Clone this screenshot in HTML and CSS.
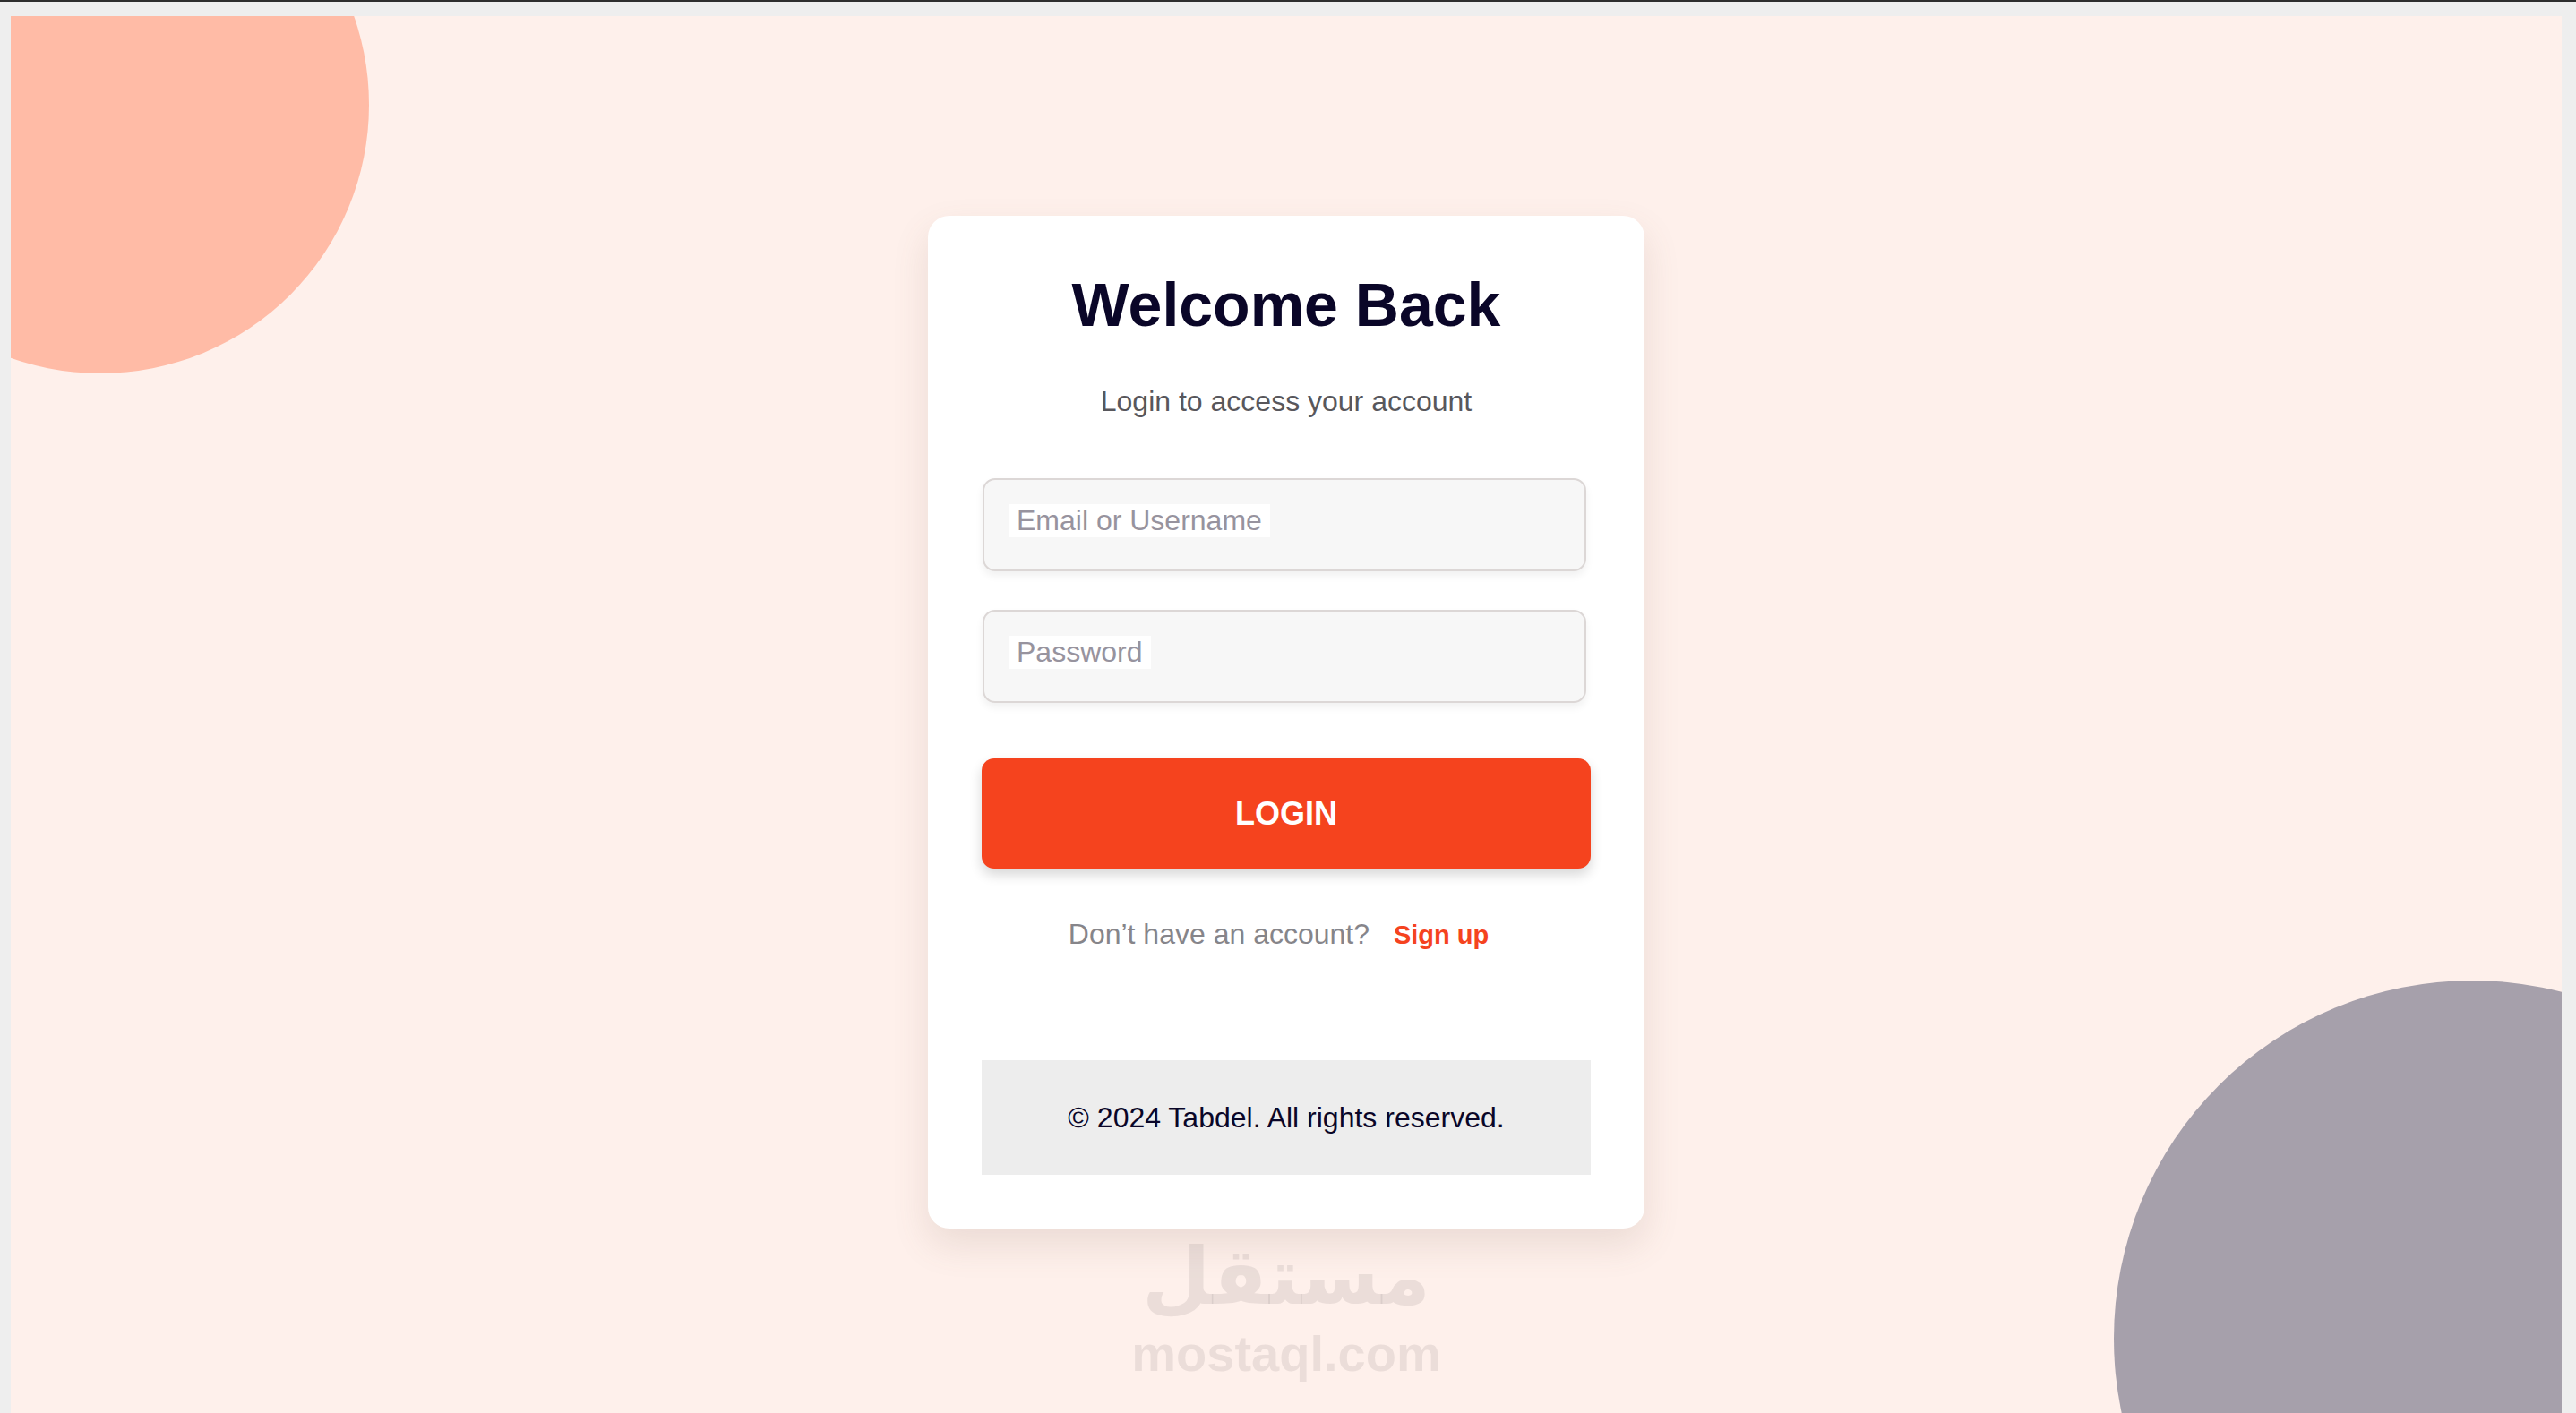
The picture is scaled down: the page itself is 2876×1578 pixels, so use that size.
FILE: index.html
```html
<html>
<head>
	<link rel="stylesheet" href="styles.css">
</head>

<body>

<div class="topbar"></div>
<div class="screen">
	<div class="circle circle-top"></div>
	<div class="circle circle-bottom"></div>

	<div class="login-card">
		<h1 class="login-title">Welcome Back</h1>
		<p class="login-subtitle">Login to access your account</p>
		<form class="login-form">
			<label class="field"><span class="hint">Email or Username</span></label>
			<label class="field"><span class="hint">Password</span></label>
			<button type="button" class="login-btn">LOGIN</button>
		</form>
		<p class="signup">Don’t have an account? <a href="#" class="signup-link">Sign up</a></p>
		<div class="login-footer">© 2024 Tabdel. All rights reserved.</div>
	</div>

	<div class="watermark">
		<div class="watermark-ar">مستقل</div>
		<div class="watermark-en">mostaql.com</div>
	</div>
</div>

</body>
</html>
```

FILE: styles.css
```css
		html, body{
			margin: 0;
			height: 100%;
			overflow: hidden;
		}
		body{
			background: #eeeeee;
			font-family: "Liberation Sans", Arial, sans-serif;
		}
		.topbar{
			height: 2px;
			background: #2e2e2e;
		}
		.screen{
			position: relative;
			margin: 16px 16px 0 12px;
			height: 1577px;
			background: #fef0eb;
			overflow: hidden;
			display: flex;
			align-items: center;
			justify-content: center;
		}
		.circle{
			position: absolute;
			border-radius: 50%;
		}
		.circle-top{
			width: 600px;
			height: 600px;
			top: -201px;
			left: -200px;
			background: #ffbba6;
		}
		.circle-bottom{
			width: 800px;
			height: 800px;
			right: -300px;
			bottom: -300px;
			background: #a6a0ab;
		}
		.login-card{
			position: relative;
			width: 800px;
			box-sizing: border-box;
			padding: 57px 60px 60px 60px;
			background: #fff;
			border-radius: 24px;
			box-shadow: 0 18px 40px rgba(120, 90, 80, 0.14);
			text-align: center;
		}
		.login-title{
			margin: 0;
			padding-top: 3px;
			font-size: 68px;
			line-height: 78px;
			font-weight: 700;
			color: #0a0628;
		}
		.login-subtitle{
			margin: 51px 0 0 0;
			font-size: 32px;
			line-height: 37px;
			color: #58575c;
		}
		.login-form{
			margin: 67px 0 0 0;
			display: flex;
			flex-direction: column;
		}
		.field{
			display: flex;
			align-items: flex-start;
			width: 674px;
			height: 104px;
			margin-left: 1px;
			box-sizing: border-box;
			padding: 27px 27px 0 27px;
			background: #f7f7f7;
			border: 2px solid #dcd7d6;
			border-radius: 14px;
			box-shadow: 0 5px 10px rgba(0, 0, 0, 0.06);
		}
		.field + .field{
			margin-top: 43px;
		}
		.hint{
			padding: 0 9px;
			background: #fff;
			font-size: 32px;
			line-height: 37px;
			color: #97939e;
		}
		.login-btn{
			margin-top: 62px;
			height: 123px;
			width: 100%;
			border: none;
			border-radius: 14px;
			background: #f5431e;
			color: #fff;
			font-family: "Liberation Sans", Arial, sans-serif;
			font-size: 36px;
			font-weight: 700;
			box-shadow: 0 7px 14px rgba(0, 0, 0, 0.16);
			cursor: pointer;
		}
		.signup{
			margin: 55px 0 0 0;
			font-size: 32px;
			line-height: 37px;
			color: #86858a;
		}
		.signup-link{
			margin: 0 17px 0 18px;
			font-size: 29px;
			font-weight: 700;
			color: #f5431e;
			text-decoration: none;
		}
		.login-footer{
			margin-top: 121px;
			height: 128px;
			display: flex;
			align-items: center;
			justify-content: center;
			background: #ededed;
			font-size: 32px;
			color: #0a0628;
		}
		.watermark{
			position: absolute;
			left: 50%;
			top: 1352px;
			transform: translateX(-50%);
			text-align: center;
			color: rgba(150, 140, 140, 0.18);
			font-weight: 700;
			pointer-events: none;
		}
		.watermark-ar{
			font-family: "DejaVu Sans", sans-serif;
			font-size: 88px;
			line-height: 112px;
		}
		.watermark-en{
			font-family: "Liberation Sans", Arial, sans-serif;
			font-size: 56px;
			line-height: 60px;
		}
```
